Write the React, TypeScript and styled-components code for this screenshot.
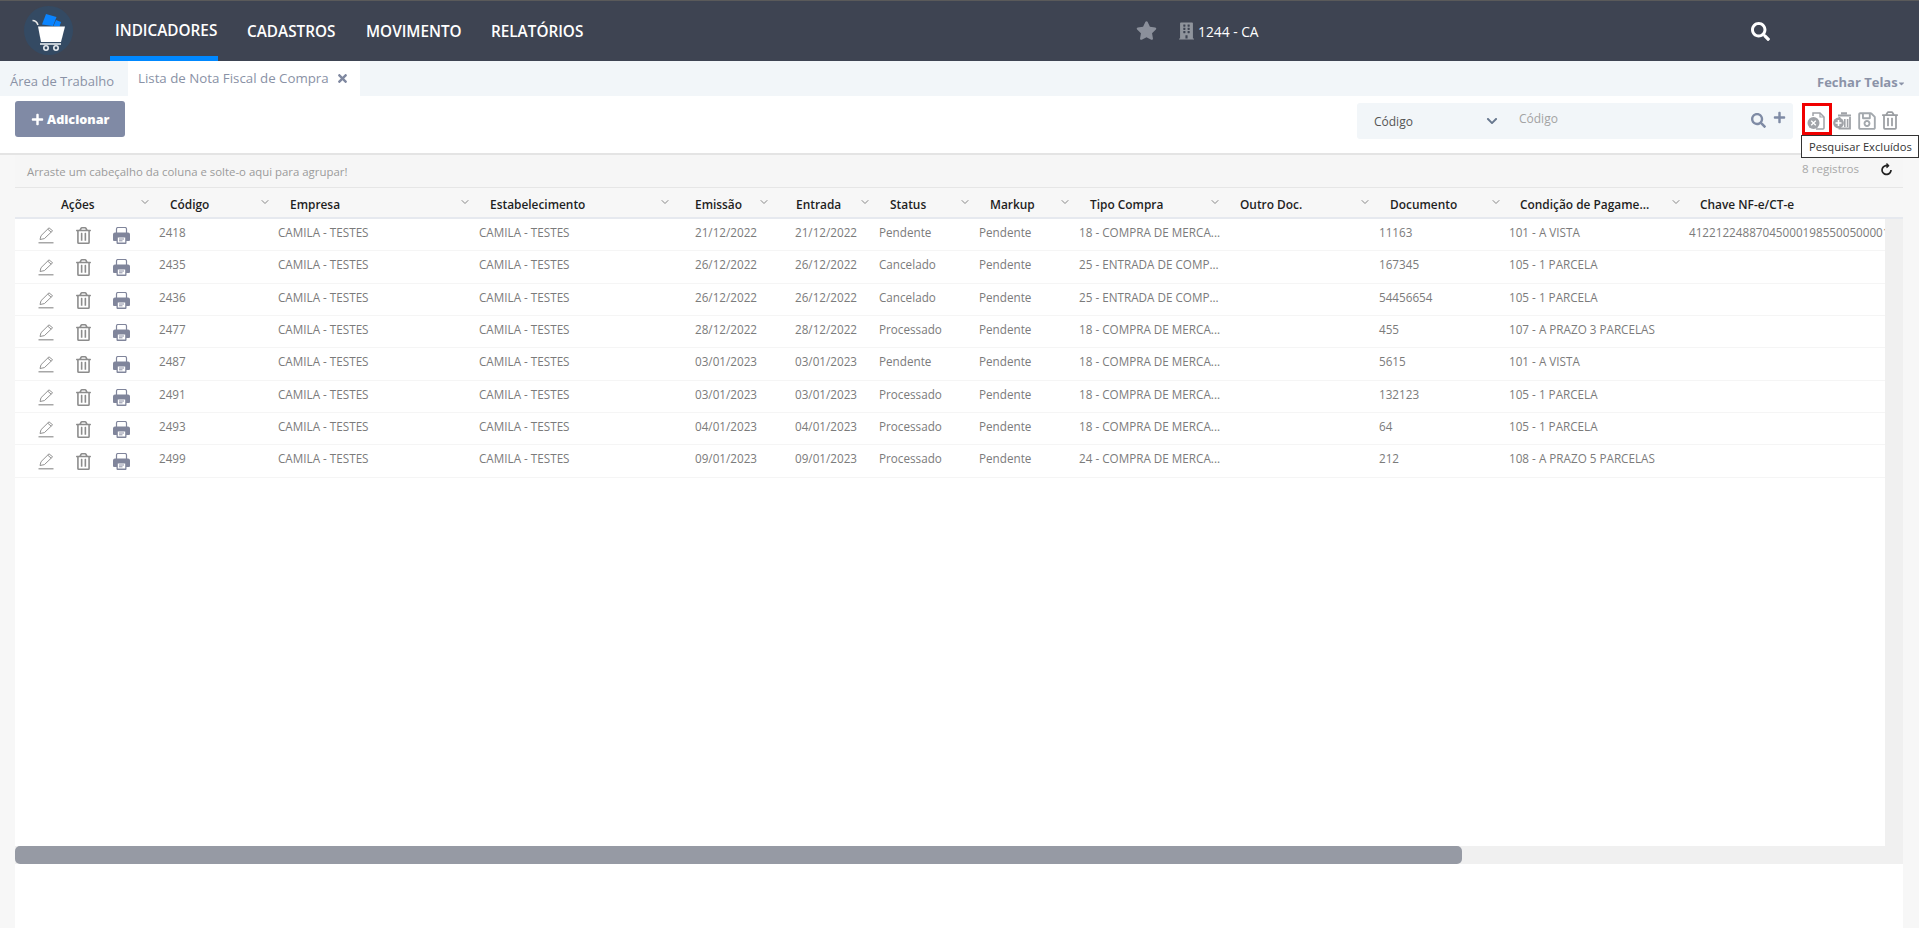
import React from "react";
import styled, { createGlobalStyle } from "styled-components";
import { FaStar, FaBuilding, FaSearch, FaPlus, FaTimes, FaChevronDown, FaRegSave, FaRegTrashAlt, FaCaretDown, FaRedoAlt } from "react-icons/fa";
import { FiChevronDown } from "react-icons/fi";

const Global = createGlobalStyle`
  html, body { margin: 0; padding: 0; background: #fff; height: 100%; overflow: hidden; }
  * { box-sizing: border-box; }
  body { font-family: "Open Sans", "Noto Sans", "Liberation Sans", sans-serif; }
`;

const Page = styled.div`position: relative; width: 1919px; height: 928px; overflow: hidden; background: #fff;`;

const TopBar = styled.header`
  position: relative; height: 61px; background: #3e4452; border-top: 1px solid #5a5a5a;
`;
const Logo = styled.svg`position: absolute; left: 24px; top: 5px; width: 49px; height: 49px;`;
const NavItem = styled.a<{ $x: number; $active?: boolean }>`
  position: absolute; left: ${p => p.$x}px; top: ${p => (p.$active ? 19 : 20)}px;
  color: #fff; font-size: 15.3px; font-weight: 600; line-height: 20px; white-space: nowrap;
`;
const NavUnderline = styled.div`position: absolute; left: 110px; top: 55px; width: 108px; height: 5px; background: #0088ff;`;
const StarIcon = styled(FaStar)`position: absolute; left: 1136px; top: 20px; width: 21px; height: 19px; color: #8b909b;`;
const BuildingIcon = styled(FaBuilding)`position: absolute; left: 1179px; top: 21px; width: 15px; height: 18px; color: #8f949c;`;
const Unit = styled.span`position: absolute; left: 1198px; top: 21px; color: #fff; font-size: 13.8px; line-height: 20px; white-space: nowrap;`;
const TopSearch = styled(FaSearch)`position: absolute; left: 1751px; top: 21px; width: 19px; height: 19px; color: #fff;`;

const TabBar = styled.nav`position: relative; height: 35px; background: #f2f6f9;`;
const Tab = styled.div<{ $active?: boolean }>`
  position: absolute; top: 0; height: 35px; line-height: ${p => (p.$active ? 34 : 40)}px;
  left: ${p => (p.$active ? 128 : 10)}px; width: ${p => (p.$active ? 232 : 110)}px;
  padding-left: ${p => (p.$active ? 10 : 0)}px; background: ${p => (p.$active ? "#fff" : "transparent")};
  color: #8a92a6; font-size: ${p => (p.$active ? 13.3 : 13)}px; white-space: nowrap;
`;
const TabClose = styled(FaTimes)`position: absolute; left: 208px; top: 11px; width: 13px; height: 13px; color: #7f88a0;`;
const CloseAll = styled.div`position: absolute; left: 1817px; top: 10px; color: #8b93a8; font-size: 13px; font-weight: 700; line-height: 22px; white-space: nowrap;`;
const CloseCaret = styled(FaCaretDown)`position: absolute; left: 1897px; top: 18px; width: 9px; height: 9px; color: #8b93a8;`;

const Toolbar = styled.section`position: relative; height: 59px; background: #fff; border-bottom: 2px solid #e4e4e4;`;
const AddButton = styled.button`
  position: absolute; left: 15px; top: 5px; width: 110px; height: 36px; border: 0; border-radius: 3px;
  background: #808aa5; color: #fff; font: 800 12.6px "Open Sans", sans-serif; padding: 0 0 0 16px;
  display: flex; align-items: center; gap: 3px;
  svg { width: 13px; height: 13px; }
`;
const SearchBox = styled.div`position: absolute; left: 1357px; top: 7px; width: 436px; height: 36px; background: #f2f6f9; border-radius: 3px;`;
const SelectLabel = styled.span`position: absolute; left: 17px; top: 9px; color: #555; font-size: 12px; line-height: 20px;`;
const SelectArrow = styled(FaChevronDown)`position: absolute; left: 128px; top: 12px; width: 14px; height: 12px; color: #68788f;`;
const Placeholder = styled.span`position: absolute; left: 162px; top: 6px; color: #a3a3a3; font-size: 12px; line-height: 20px;`;
const BoxSearch = styled(FaSearch)`position: absolute; left: 394px; top: 10px; width: 15px; height: 15px; color: #7f8ba5;`;
const BoxPlus = styled(FaPlus)`position: absolute; left: 416px; top: 8px; width: 13px; height: 13px; color: #7f8ba5;`;
const ToolIcon = styled.svg<{ $x: number; $w: number }>`
  position: absolute; left: ${p => p.$x}px; top: 16px; width: ${p => p.$w}px; height: 18px; color: #a0a3a8;
`;
const SaveIcon = styled(FaRegSave)`position: absolute; left: 1858px; top: 15px; width: 18px; height: 20px; color: #a3a8ad;`;
const BinIcon = styled(FaRegTrashAlt)`position: absolute; left: 1882px; top: 15px; width: 16px; height: 19px; color: #9a9da1;`;
const Highlight = styled.div`position: absolute; left: 1802px; top: 7px; width: 30px; height: 32px; border: 3px solid #f00000;`;
const Tooltip = styled.div`
  position: absolute; left: 1801px; top: 135px; width: 118px; height: 23px; z-index: 3; background: #fff;
  border: 1px solid #333; color: #333; font-size: 11.2px; line-height: 21px; padding-left: 7px; white-space: nowrap;
`;

const Panel = styled.main`position: relative; height: 773px; margin-left: 15px; width: 1888px; background: #fff;`;
const PageFill = styled.div`position: absolute; left: 0; top: 155px; bottom: 0; width: 1919px; background: #f7f7f7;`;
const GroupBar = styled.div`position: relative; height: 33px; background: #f6f6f6; border-bottom: 1px solid #e6e6e6;`;
const GroupHint = styled.span`position: absolute; left: 12px; top: 7px; color: #9b9b9b; font-size: 11.4px; line-height: 20px; white-space: nowrap;`;
const Count = styled.span`position: absolute; left: 1787px; top: 4px; color: #a8a8a8; font-size: 11.6px; line-height: 20px; white-space: nowrap;`;
const Refresh = styled(FaRedoAlt)`position: absolute; left: 1866px; top: 9px; width: 11px; height: 12px; color: #222; transform: rotate(-45deg);`;

const HeaderRow = styled.div`position: relative; height: 31px; background: #f7f7f7; border-bottom: 2px solid #e6e9ef;`;
const HeaderCell = styled.span<{ $x: number }>`
  position: absolute; left: ${p => p.$x - 15}px; top: 5.5px; color: #1f1f1f; font-size: 11.9px; font-weight: 600; line-height: 20px; white-space: nowrap;
`;
const HeaderArrow = styled(FiChevronDown)<{ $x: number }>`
  position: absolute; left: ${p => p.$x - 15 - 6}px; top: 8px; width: 12px; height: 12px; color: #888;
`;

const BodyWrap = styled.div`display: flex; height: 627px;`;
const Viewport = styled.div`width: 1870px; height: 627px; overflow: hidden; background: #fff;`;
const VTrack = styled.div`width: 18px; background: #f0f0f0;`;
const Row = styled.div`position: relative; height: 32.33px; border-bottom: 1px solid #f5f5f5; width: 2400px;`;
const Cell = styled.span<{ $x: number }>`
  position: absolute; left: ${p => p.$x - 15}px; top: 3px; color: #7b7b7b; font-size: 11.7px; line-height: 20px; white-space: nowrap;
`;
const RowIcon = styled.svg<{ $x: number; $w: number; $c: string }>`
  position: absolute; left: ${p => p.$x - 15}px; top: 8px; width: ${p => p.$w}px; height: 17px; color: ${p => p.$c};
`;
const TrashIcon = styled(FaRegTrashAlt)`position: absolute; left: 61px; top: 8px; width: 15px; height: 17px; color: #8c8c8c;`;

const HTrack = styled.div`height: 18px; background: #f0f0f0; position: relative;`;
const HThumb = styled.div`position: absolute; left: 0; top: 0; height: 18px; width: 1447px; background: #969aa4; border-radius: 5px;`;
const Footer = styled.div`height: 64px; background: #fff;`;

const headers: [string, number, number][] = [
  ["Ações", 61, 145], ["Código", 170, 265], ["Empresa", 290, 465], ["Estabelecimento", 490, 665],
  ["Emissão", 695, 764], ["Entrada", 796, 865], ["Status", 890, 965], ["Markup", 990, 1065],
  ["Tipo Compra", 1090, 1215], ["Outro Doc.", 1240, 1365], ["Documento", 1390, 1496],
  ["Condição de Pagame...", 1520, 1676], ["Chave NF-e/CT-e", 1700, 0],
];
const X = { cod: 159, emp: 278, est: 479, emi: 695, ent: 795, sta: 879, mar: 979, tip: 1079, doc: 1379, con: 1509, cha: 1689 };
const C18 = "18 - COMPRA DE MERCA...";
const C25 = "25 - ENTRADA DE COMP...";
const rows = [
  ["2418", "21/12/2022", "Pendente", C18, "11163", "101 - A VISTA", "41221224887045000198550050000116311000000000"],
  ["2435", "26/12/2022", "Cancelado", C25, "167345", "105 - 1 PARCELA", ""],
  ["2436", "26/12/2022", "Cancelado", C25, "54456654", "105 - 1 PARCELA", ""],
  ["2477", "28/12/2022", "Processado", C18, "455", "107 - A PRAZO 3 PARCELAS", ""],
  ["2487", "03/01/2023", "Pendente", C18, "5615", "101 - A VISTA", ""],
  ["2491", "03/01/2023", "Processado", C18, "132123", "105 - 1 PARCELA", ""],
  ["2493", "04/01/2023", "Processado", C18, "64", "105 - 1 PARCELA", ""],
  ["2499", "09/01/2023", "Processado", "24 - COMPRA DE MERCA...", "212", "108 - A PRAZO 5 PARCELAS", ""],
];

export default function App() {
  return (
    <Page>
      <Global />
      <PageFill />
      <TopBar>
        <Logo viewBox="24 6 49 49">
          <circle cx="48.5" cy="30.5" r="24.5" fill="#344a63" />
          <path d="M46 14 56.5 17 53 26 42 24.5Z" fill="#0a84ff" />
          <path d="M56 20 61 22 59.5 26.5 53.5 26Z" fill="#0a84ff" />
          <path d="M32.5 20.5C35.5 20.5 37 22 38 25" fill="none" stroke="#e8e8e8" strokeWidth="1.6" />
          <path d="M38 26.5H65L61 42H41Z" fill="#fff" />
          <path d="M40 43.2H61V44.8H40Z" fill="#e8ecf0" />
          <circle cx="46" cy="48" r="2.2" fill="none" stroke="#e8ecf0" strokeWidth="1.6" />
          <circle cx="56" cy="48" r="2.2" fill="none" stroke="#e8ecf0" strokeWidth="1.6" />
        </Logo>
        <NavItem $x={115} $active>INDICADORES</NavItem>
        <NavUnderline />
        <NavItem $x={247}>CADASTROS</NavItem>
        <NavItem $x={366}>MOVIMENTO</NavItem>
        <NavItem $x={491}>RELATÓRIOS</NavItem>
        <StarIcon />
        <BuildingIcon />
        <Unit>1244 - CA</Unit>
        <TopSearch />
      </TopBar>
      <TabBar>
        <Tab>Área de Trabalho</Tab>
        <Tab $active>Lista de Nota Fiscal de Compra<TabClose /></Tab>
        <CloseAll>Fechar Telas</CloseAll>
        <CloseCaret />
      </TabBar>
      <Toolbar>
        <AddButton><FaPlus />Adicionar</AddButton>
        <SearchBox>
          <SelectLabel>Código</SelectLabel>
          <SelectArrow />
          <Placeholder>Código</Placeholder>
          <BoxSearch />
          <BoxPlus />
        </SearchBox>
        <Highlight />
        <ToolIcon $x={1807} $w={19} viewBox="0 0 19 18" fill="none">
          <path d="M6 4V1h7l4 4v11a1 1 0 0 1-1 1H9" stroke="currentColor" strokeWidth="1.5" />
          <path d="M13 1v4h4" stroke="currentColor" strokeWidth="1.2" />
          <circle cx="6.5" cy="11" r="6" fill="currentColor" />
          <path d="m4.2 8.7 4.6 4.6m0-4.6-4.6 4.6" stroke="#fff" strokeWidth="1.3" />
        </ToolIcon>
        <ToolIcon $x={1833} $w={19} viewBox="0 0 19 18" fill="none">
          <path d="M8 1.2h6M5 3.5h13" stroke="currentColor" strokeWidth="2" />
          <path d="M6.5 5v11.5h10.5V5" stroke="currentColor" strokeWidth="1.8" />
          <path d="M11.8 7v8M14.6 7v8" stroke="currentColor" strokeWidth="1.6" />
          <circle cx="5.5" cy="11" r="5.4" fill="currentColor" />
          <path d="M5.5 8v6M2.5 11h6" stroke="#fff" strokeWidth="1.6" />
        </ToolIcon>
        <SaveIcon />
        <BinIcon />
      </Toolbar>
      <Tooltip>Pesquisar Excluídos</Tooltip>
      <Panel>
        <GroupBar>
          <GroupHint>Arraste um cabeçalho da coluna e solte-o aqui para agrupar!</GroupHint>
          <Count>8 registros</Count>
          <Refresh />
        </GroupBar>
        <HeaderRow>
          {headers.map(([label, x, arrow]) => (
            <React.Fragment key={label}>
              <HeaderCell $x={x}>{label}</HeaderCell>
              {arrow > 0 && <HeaderArrow $x={arrow} />}
            </React.Fragment>
          ))}
        </HeaderRow>
        <BodyWrap>
          <Viewport>
            {rows.map(r => (
              <Row key={r[0]}>
                <RowIcon $x={38} $w={16} $c="#929292" viewBox="0 0 16 17" fill="none">
                  <path d="M2 12.5 3 8.7 11 .8 14.6 3.8 6.4 11.6Z" stroke="currentColor" strokeWidth="1" />
                  <path d="M9.8 2.2 13.2 5.2" stroke="currentColor" strokeWidth="1" />
                  <path d="M0.5 15.8h15" stroke="currentColor" strokeWidth="1.2" />
                </RowIcon>
                <TrashIcon />
                <RowIcon $x={113} $w={17} $c="#80859b" viewBox="0 0 17 17">
                  <path d="M3.5 6V2a1.5 1.5 0 0 1 1.5-1.5h7A1.5 1.5 0 0 1 13.5 2v4" fill="none" stroke="currentColor" strokeWidth="1.2" />
                  <path d="M2 5.5h13a2 2 0 0 1 2 2v5.5a1 1 0 0 1-1 1h-2.5v2a1 1 0 0 1-1 1h-8a1 1 0 0 1-1-1v-2H1a1 1 0 0 1-1-1V7.5a2 2 0 0 1 2-2Z" fill="currentColor" />
                  <path d="M4.8 10.5h7.4v5H4.8Z" fill="#fff" />
                  <path d="M6 12h5M6 13.8h3.5" stroke="currentColor" strokeWidth=".9" />
                </RowIcon>
                <Cell $x={X.cod}>{r[0]}</Cell>
                <Cell $x={X.emp}>CAMILA - TESTES</Cell>
                <Cell $x={X.est}>CAMILA - TESTES</Cell>
                <Cell $x={X.emi}>{r[1]}</Cell>
                <Cell $x={X.ent}>{r[1]}</Cell>
                <Cell $x={X.sta}>{r[2]}</Cell>
                <Cell $x={X.mar}>Pendente</Cell>
                <Cell $x={X.tip}>{r[3]}</Cell>
                <Cell $x={X.doc}>{r[4]}</Cell>
                <Cell $x={X.con}>{r[5]}</Cell>
                <Cell $x={X.cha}>{r[6]}</Cell>
              </Row>
            ))}
          </Viewport>
          <VTrack />
        </BodyWrap>
        <HTrack><HThumb /></HTrack>
        <Footer />
      </Panel>
    </Page>
  );
}
